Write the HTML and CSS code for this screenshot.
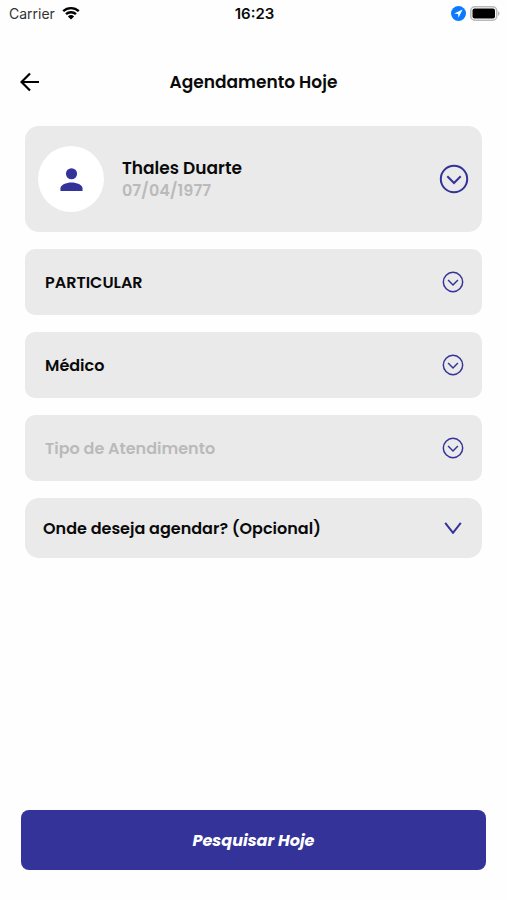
FILE: index.html
```html
<!DOCTYPE html>
<html lang="pt-BR">
<head>
<meta charset="utf-8">
<meta name="viewport" content="width=device-width, initial-scale=1">
<title>Agendamento Hoje</title>
<link rel="stylesheet" href="styles.css">
</head>
<body>
<svg class="defs" aria-hidden="true">
  <symbol id="circle-chevron" viewBox="0 0 30 30">
    <circle cx="15" cy="15" r="13.2"/>
    <path d="M8.300 12.200 15 19l6.700-6.800"/>
  </symbol>
</svg>
<div class="screen">
  <div class="status">
    <div class="status-side">
      <span>Carrier</span>
      <svg class="wifi" viewBox="0 0 18 14" aria-hidden="true">
        <path d="M1.200 5.200a11.300 11.300 0 0 1 15.600 0M4 8.200a7.200 7.200 0 0 1 10 0"/>
        <path class="wifi-dot" d="M9 13.500 5.900 10.400a4.500 4.500 0 0 1 6.200 0z"/>
      </svg>
    </div>
    <time class="clock">16:23</time>
    <div class="status-side status-end">
      <svg class="location" viewBox="0 0 15 15" aria-hidden="true">
        <circle cx="7.500" cy="7.500" r="7.500" fill="#0a7aff"/>
        <path d="M11.600 3.400 3.200 7.500l3.900.4.400 3.900z" fill="#fff"/>
      </svg>
      <svg class="battery" viewBox="0 0 30 15" aria-hidden="true">
        <rect x=".8" y=".8" width="25.900" height="13.400" rx="4" fill="#fff" stroke="#b9b9b9" stroke-width="1.600"/>
        <rect x="2.500" y="2.500" width="22.500" height="10" rx="2" fill="#000"/>
        <path d="M28 5.200c2 .8 2 3.800 0 4.600z" fill="#b9b9b9"/>
      </svg>
    </div>
  </div>

  <header class="header">
    <button class="back" type="button" aria-label="Voltar">
      <svg viewBox="0 0 20 20" aria-hidden="true"><path d="M19 10H2M10 1.500 1.500 10l8.500 8.500"/></svg>
    </button>
    <h1>Agendamento Hoje</h1>
  </header>

  <form class="form">
    <button class="card patient" type="button">
      <span class="avatar">
        <svg viewBox="0 0 24 24" aria-hidden="true"><circle cx="12" cy="6" r="5.800"/><path d="M0.500 24v-3c0-3.500 6-6 11.500-6s11.500 2.500 11.500 6v3z"/></svg>
      </span>
      <span class="person">
        <span class="name">Thales Duarte</span>
        <span class="birth">07/04/1977</span>
      </span>
      <svg class="chevron chevron-large" aria-hidden="true"><use href="#circle-chevron"/></svg>
    </button>

    <div class="field">
      <select class="card" aria-label="Convênio"><option>PARTICULAR</option></select>
      <svg class="chevron" aria-hidden="true"><use href="#circle-chevron"/></svg>
    </div>
    <div class="field">
      <select class="card" aria-label="Profissional"><option>Médico</option></select>
      <svg class="chevron" aria-hidden="true"><use href="#circle-chevron"/></svg>
    </div>
    <div class="field">
      <select class="card empty" aria-label="Tipo de Atendimento"><option>Tipo de Atendimento</option></select>
      <svg class="chevron" aria-hidden="true"><use href="#circle-chevron"/></svg>
    </div>

    <button class="card place" type="button" aria-expanded="false">
      <span>Onde deseja agendar? (Opcional)</span>
      <svg class="chevron chevron-plain" viewBox="0 0 18 12" aria-hidden="true"><path d="M1.200 .8 9 10.800l7.800-10"/></svg>
    </button>

    <button class="submit" type="submit">Pesquisar Hoje</button>
  </form>
</div>
</body>
</html>
```

FILE: styles.css
```css
:root {
  --brand: #333399;
  --card: #eaeaea;
  --muted: #bababa;
}

* {
  box-sizing: border-box;
}

body {
  margin: 0;
  background: #fefefe;
  color: #0a0a0a;
  font-family: Poppins, Inter, "Liberation Sans", sans-serif;
  font-size: 16px;
  font-weight: 600;
}

svg {
  display: block;
  flex: none;
}

button,
select {
  border: 0;
  margin: 0;
  color: inherit;
  font: inherit;
  cursor: pointer;
}

.defs {
  display: none;
}

.screen {
  display: flex;
  flex-direction: column;
  min-height: 100vh;
}

.status {
  display: grid;
  grid-template-columns: 1fr auto 1fr;
  align-items: center;
  height: 26px;
  padding: 0 7px 0 9px;
  font-family: Inter, "Liberation Sans", sans-serif;
  font-size: 14px;
}

.status-side {
  display: flex;
  align-items: center;
  gap: 7px;
  color: #333;
  font-weight: 400;
}

.status-end {
  justify-content: flex-end;
  gap: 4px;
}

.clock {
  font-size: 15px;
}

.wifi {
  width: 18px;
  height: 14px;
  fill: none;
  stroke: #000;
  stroke-width: 2.4;
}

.wifi .wifi-dot {
  fill: #000;
  stroke: none;
}

.location {
  width: 15px;
  height: 15px;
}

.battery {
  width: 30px;
  height: 15px;
}

.header {
  display: grid;
  grid-template-columns: 20px 1fr 20px;
  align-items: center;
  height: 100px;
  padding: 12px 20px 0;
}

.back {
  padding: 0;
  background: none;
}

.back svg {
  width: 20px;
  height: 20px;
  fill: none;
  stroke: #000;
  stroke-width: 2.2;
}

h1 {
  margin: 0;
  font-size: 17px;
  font-weight: 600;
  line-height: 24px;
  text-align: center;
}

.form {
  display: flex;
  flex: 1;
  flex-direction: column;
  gap: 17px;
  padding: 0 25px 30px;
}

.card {
  display: flex;
  align-items: center;
  width: 100%;
  border-radius: 10px;
  background: var(--card);
  text-align: left;
}

.patient {
  gap: 18px;
  padding: 20px 13px;
  border-radius: 14px;
}

.avatar {
  display: grid;
  flex: none;
  place-items: center;
  width: 66px;
  height: 66px;
  border-radius: 50%;
  background: #fff;
}

.avatar svg {
  width: 23px;
  height: 23px;
  fill: var(--brand);
}

.person {
  display: flex;
  flex: 1;
  flex-direction: column;
}

.name {
  font-size: 17px;
  line-height: 24px;
}

.birth {
  color: var(--muted);
  line-height: 22px;
}

.field {
  display: grid;
  align-items: center;
}

.field > * {
  grid-area: 1 / 1;
}

select.card {
  height: 66px;
  padding: 0 60px 0 20px;
  appearance: none;
}

select.empty {
  color: var(--muted);
}

.chevron {
  width: 22px;
  height: 22px;
  fill: none;
  stroke: var(--brand);
  stroke-width: 2;
}

.field .chevron {
  justify-self: end;
  margin-right: 18px;
  pointer-events: none;
}

.patient .chevron-large {
  width: 30px;
  height: 30px;
}

.place {
  justify-content: space-between;
  min-height: 60px;
  padding: 0 20px 0 18px;
  border-radius: 14px;
}

.place .chevron-plain {
  width: 18px;
  height: 12px;
}

.submit {
  min-height: 60px;
  margin: auto -4px 0;
  border-radius: 8px;
  background: var(--brand);
  color: #fff;
  font-style: italic;
  font-weight: 700;
}
```
